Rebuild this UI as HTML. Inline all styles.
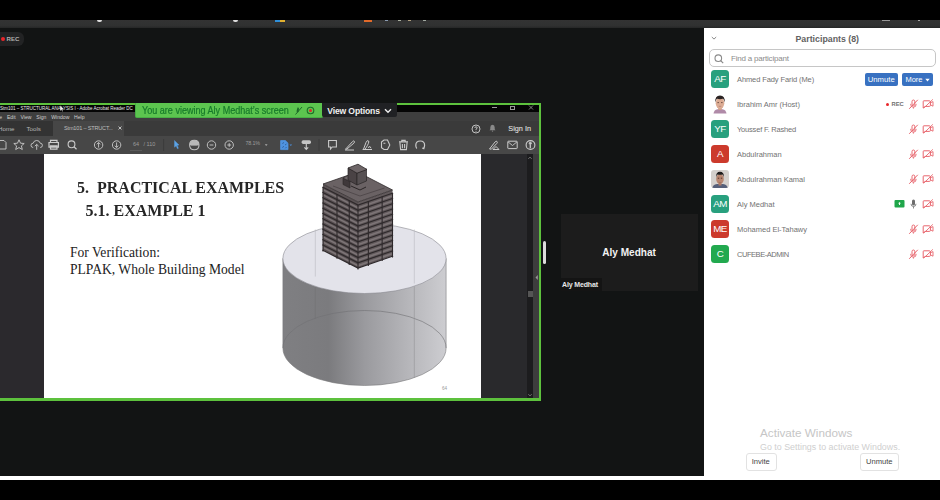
<!DOCTYPE html>
<html><head><meta charset="utf-8">
<style>
*{margin:0;padding:0;box-sizing:border-box}
html,body{width:940px;height:500px;overflow:hidden;background:#000;font-family:"Liberation Sans",sans-serif}
.a{position:absolute}
#top{left:0;top:0;width:940px;height:20px;background:#000}
#strip{left:0;top:20px;width:940px;height:8px;background:linear-gradient(#333,#303131 70%,#262727)}
#main{left:0;top:28px;width:704px;height:448px;background:#121414}
#wline{left:0;top:476px;width:940px;height:4px;background:#fff}
#panel{left:704px;top:28px;width:236px;height:448px;background:#fff}
.t{white-space:nowrap;line-height:1}
.av{left:711px;width:18px;height:18px;border-radius:3.5px;color:#fff;font-size:9.8px;line-height:18.6px;text-align:center;letter-spacing:-0.6px}
.nm{left:737px;font-size:7.5px;color:#727272}
.ph1{left:712px;width:17px;height:18px;background:radial-gradient(ellipse 4px 5px at 8.5px 8px,#b08070 0,#a07060 80%,transparent 100%),radial-gradient(ellipse 5px 5px at 8.5px 5px,#2a2220 0,#2a2220 90%,transparent 100%),radial-gradient(ellipse 8px 5px at 8.5px 18px,#b98aa0 0,#b98aa0 90%,transparent 100%),#fff}
.ph2{left:711px;width:18px;height:18px;border-radius:3px;background:radial-gradient(ellipse 4px 5px at 9px 8px,#8a6a58 0,#7a5a48 80%,transparent 100%),radial-gradient(ellipse 5px 4px at 9px 4.5px,#1a1a1a 0,#1a1a1a 90%,transparent 100%),radial-gradient(ellipse 9px 5px at 9px 18px,#4a5060 0,#4a5060 90%,transparent 100%),#cfcac8}
</style></head><body>
<div class="a" id="top"></div>
<div class="a" id="strip"></div>
<div class="a" id="main"></div>
<div class="a" id="wline"></div>
<div class="a" id="panel"></div>

<!-- strip dots -->
<div class="a" style="left:97px;top:20px;width:5px;height:1.5px;border-radius:0 0 2px 2px;background:#ddd"></div>
<div class="a" style="left:233px;top:20px;width:5px;height:1.5px;border-radius:0 0 2px 2px;background:#ddd"></div>
<div class="a" style="left:275px;top:20px;width:5px;height:1.5px;background:#2f8fd8"></div>
<div class="a" style="left:280px;top:20px;width:5px;height:1.5px;background:#e0b030"></div>
<div class="a" style="left:364px;top:20px;width:8px;height:1.5px;background:#e06a2a"></div>
<div class="a" style="left:385px;top:20px;width:3px;height:1px;background:#8a9ab0"></div>
<div class="a" style="left:398px;top:20px;width:3px;height:1px;background:#aab0a0"></div>
<div class="a" style="left:408px;top:20px;width:3px;height:1px;background:#b0a080"></div>
<div class="a" style="left:423px;top:20px;width:3px;height:1px;background:#a0a8a0"></div>
<div class="a" style="left:882px;top:20px;width:8px;height:1px;background:#999"></div>
<div class="a" style="left:918px;top:20px;width:2px;height:1px;background:#aaa"></div>
<!-- REC badge -->
<div class="a" style="left:-6px;top:32px;width:30px;height:14px;border-radius:6px;background:#222324"></div>
<div class="a" style="left:1px;top:36.5px;width:4px;height:4px;border-radius:50%;background:#e8262a"></div>
<div class="a t" style="left:6.6px;top:36.2px;font-size:6.1px;font-weight:bold;color:#b0b0b0">REC</div>

<!-- Acrobat window -->
<div class="a" style="left:0;top:103px;width:541px;height:298px;background:#5dc13d"></div>
<div class="a" style="left:0;top:105px;width:539px;height:293px;background:#3c3c3c"></div>
<div class="a" style="left:0;top:105px;width:539px;height:7px;background:#050505"></div>
<div class="a" style="left:0;top:112px;width:539px;height:9px;background:#3e3e3e"></div>
<div class="a" style="left:0;top:121px;width:539px;height:15px;background:#3a3a3a"></div>
<div class="a" style="left:0;top:121px;width:53px;height:15px;background:#333"></div>
<div class="a" style="left:53px;top:121px;width:71px;height:15px;background:#464646"></div>
<div class="a" style="left:0;top:136px;width:539px;height:18px;background:#474747"></div>
<div class="a" style="left:0;top:154px;width:44px;height:244px;background:#2b292d"></div>
<div class="a" style="left:44px;top:154px;width:437px;height:244px;background:#fff"></div>
<div class="a" style="left:481px;top:154px;width:46px;height:244px;background:#29292c"></div>
<div class="a" style="left:527px;top:154px;width:6px;height:244px;background:#1c1c1e"></div>
<div class="a" style="left:533px;top:154px;width:6px;height:244px;background:#3d3d3d"></div>

<!-- green banner -->
<div class="a" style="left:135px;top:103px;width:188px;height:15px;background:#5cc54f;border:1px solid #48ae45;border-top:none;border-radius:0 0 2px 2px"></div>
<div class="a" style="left:322px;top:103px;width:75px;height:14px;background:#202124;border-radius:0 0 2px 2px"></div>

<!-- video tile -->
<div class="a" style="left:561px;top:214px;width:137px;height:77px;background:#1c1c1c"></div>



<!-- ACROBAT DETAILS -->
<div class="a t" style="left:0px;top:106.9px;font-size:4.5px;color:#f0f0f0">Stm101 – STRUCTURAL ANALYSIS I - Adobe Acrobat Reader DC</div>
<div class="a" style="left:492px;top:107.2px;width:5px;height:0.7px;background:#9a9a9a"></div>
<div class="a" style="left:510px;top:105.6px;width:4.5px;height:4px;border:0.7px solid #9a9a9a"></div>
<svg class="a" style="left:528px;top:105px" width="6" height="5" viewBox="0 0 6 5"><path d="M1 0.5L5 4.5M5 0.5L1 4.5" stroke="#b0b0b0" stroke-width="0.7"/></svg>
<div class="a t" style="left:-6px;top:114.9px;font-size:5.1px;color:#d0d0d0;word-spacing:3.35px">File Edit View Sign Window Help</div>
<div class="a t" style="left:-2px;top:125.6px;font-size:6.2px;color:#b5b5b5">Home</div>
<div class="a t" style="left:26.5px;top:125.6px;font-size:6.2px;color:#b5b5b5">Tools</div>
<div class="a t" style="left:64px;top:125.8px;font-size:5.6px;color:#bdbdbd;letter-spacing:-0.2px">Stm101 – STRUCT...</div>
<svg class="a" style="left:117.5px;top:126px" width="4" height="4" viewBox="0 0 4 4"><path d="M0.5 0.5L3.5 3.5M3.5 0.5L0.5 3.5" stroke="#ccc" stroke-width="0.9"/></svg>
<svg class="a" style="left:470.5px;top:123.5px" width="10" height="10" viewBox="0 0 10 10"><circle cx="5" cy="5" r="4" fill="none" stroke="#cfcfcf" stroke-width="0.9"/><path d="M3.8 3.9Q3.9 2.8 5 2.8Q6.2 2.8 6.2 3.8Q6.2 4.5 5 5.1V5.9" fill="none" stroke="#cfcfcf" stroke-width="0.9"/><circle cx="5" cy="7.2" r="0.5" fill="#cfcfcf"/></svg>
<svg class="a" style="left:489px;top:124px" width="7" height="8" viewBox="0 0 7 8"><path d="M3.5 0.8Q1.3 0.8 1.3 3.4V5.3L0.5 6.3H6.5L5.7 5.3V3.4Q5.7 0.8 3.5 0.8Z" fill="#8a8a8a"/><circle cx="3.5" cy="7.1" r="0.7" fill="#8a8a8a"/></svg>
<div class="a t" style="left:508.3px;top:125.2px;font-size:7.3px;font-weight:normal;color:#dadada;letter-spacing:0px;-webkit-text-stroke:0.15px #dadada">Sign In</div>

<svg class="a" style="left:59px;top:104.5px" width="6" height="7" viewBox="0 0 6 7"><path d="M1 0.5L5.2 4.3L3.2 4.5L4 6.3L3.2 6.6L2.4 4.8L1 6Z" fill="#f4f4f4" stroke="#222" stroke-width="0.3"/></svg>
<!-- toolbar icons -->
<svg class="a" style="left:0;top:136px" width="539" height="18" viewBox="0 0 539 18" fill="none" stroke="#cacaca" stroke-width="0.9">
<path d="M-3 4.5H4L6 6.5V13H-3Z"/>
<path d="M19 3.8L20.5 7.2L24.2 7.5L21.4 9.9L22.3 13.5L19 11.6L15.7 13.5L16.6 9.9L13.8 7.5L17.5 7.2Z"/>
<path d="M33.2 11.5Q31 11.5 31 9.3Q31 7.2 33.2 7.2Q33.8 4.5 36.7 4.5Q39.6 4.5 40.2 7.2Q42.4 7.2 42.4 9.3Q42.4 11.5 40.2 11.5M36.7 13.8V8.4M34.8 10.2L36.7 8.4L38.6 10.2"/>
<path d="M50.5 6.5V4.3H57V6.5M49 6.5H58.4V11.2H49ZM50.5 9.8H57V13.2H50.5Z" stroke-width="1.2"/>
<circle cx="71.5" cy="8.3" r="3.4" stroke-width="1.1"/><path d="M74 10.8L76.5 13.3" stroke-width="1.3"/>
<circle cx="98.6" cy="9" r="4.2"/><path d="M98.6 11.6V6.6M96.8 8.3L98.6 6.5L100.4 8.3"/>
<circle cx="116.6" cy="9" r="4.2"/><path d="M116.6 6.4V11.4M114.8 9.7L116.6 11.5L118.4 9.7"/>
<path d="M163.6 3V15" stroke="#3c3c3c" stroke-width="1"/>
<path d="M319 3V15" stroke="#3c3c3c" stroke-width="1"/>
<path d="M174.5 4.5L179 9L177.2 9.3L178.4 12.3L177.4 12.7L176.2 9.8L174.5 11.2Z" fill="#5aa2e6" stroke="#5aa2e6" stroke-width="0.4"/>
<path d="M189.6 9.2Q189.6 4.2 194.3 4.2Q199 4.2 199 9.2Z" fill="#b8b8b8" stroke="none"/><path d="M189.6 9Q189.6 13.8 194.3 13.8Q199 13.8 199 9Q199 4.2 194.3 4.2Q189.6 4.2 189.6 9Z" stroke="#bdbdbd" stroke-width="1.1"/><path d="M191 9.5H197.6" stroke="#999" stroke-width="0.8"/>
<circle cx="211.5" cy="9" r="4.2"/><path d="M209.6 9H213.4"/>
<circle cx="229.2" cy="9" r="4.2"/><path d="M227.3 9H231.1M229.2 7.1V10.9"/>
<path d="M264.8 8.2H267.6L266.2 10Z" fill="#aaa" stroke="none"/>
<path d="M280.6 4.6H285.4L288 7.2V13.6H280.6Z" fill="#4f93e0" stroke="#4f93e0" stroke-width="0.8" stroke-linejoin="round"/><path d="M282.3 7.5L284 6.5M285 9L286.5 8M282.3 11.5L284 10.3M285.3 12.3L286.6 11" stroke="#2f5f9a" stroke-width="0.9"/>
<path d="M289.5 8.4H292.1L290.8 9.9Z" fill="#4a90e0" stroke="none"/>
<rect x="301.6" y="4.3" width="9.4" height="3.6" rx="1.6" fill="#c4c4c4" stroke="none"/><path d="M306.3 7.8V13.3M304.4 11.3L306.3 13.4L308.2 11.3" stroke-width="1.1"/>
<path d="M328.6 4.5H336.4V11H332.2L330.5 13V11H328.6Z" stroke-width="1.1"/>
<path d="M345.5 13.2L352.6 5.5Q353.6 4.4 354.3 5.3Q354.9 6.1 353.9 7.1L346.8 13.2ZM345 14H354" stroke-width="1"/>
<path d="M363.5 13.2L366 6.5Q367.4 3.5 368.6 5Q369.5 6.4 366 11.8L365 13.3M368 11.6L370 10.5L371 12.2M362.6 13.5H372" stroke-width="1"/>
<path d="M381.5 6L384 4H387.5L389.8 9L387.5 13.5H384L381.5 11.8V6Z M383.4 7.3H385.4" stroke-width="1.1"/>
<path d="M399 5.9H408M401.8 5.8V4.4H405.2V5.8M399.9 6.6L400.6 13.6H406.4L407.1 6.6M402.4 8V12.3M404.6 8V12.3" stroke-width="1.1"/>
<path d="M416.8 12.5Q415.8 11.5 415.8 9.2Q415.8 5 420.3 5Q424.6 5 424.6 9.2Q424.6 11.3 423.6 12.3M422.2 12L423.8 12.6L424.3 11" stroke-width="1.2"/>
<path d="M489.5 13L495.2 5.8Q496.2 4.8 497 5.5Q497.8 6.2 496.9 7.3L491.4 13.2ZM496 10.5L499 13.5H493Z" stroke-width="1"/>
<rect x="507.8" y="5.2" width="9.4" height="7.4" rx="0.6" stroke-width="1"/><path d="M508 5.8L512.5 9.5L517 5.8" stroke-width="0.9"/>
<circle cx="530.5" cy="9" r="4.4" stroke-width="1.1"/><circle cx="530.3" cy="7.3" r="1.1" fill="#cacaca"/><path d="M530.3 8.6V12.3" stroke-width="1.3"/>
</svg>
<div class="a t" style="left:133px;top:141.8px;font-size:5.5px;color:#9c9c9c">64</div>
<div class="a t" style="left:143.5px;top:141.8px;font-size:5.5px;color:#9c9c9c">/ 110</div>
<div class="a" style="left:130px;top:150px;width:12px;height:0.6px;background:#5a5a5a"></div>
<div class="a t" style="left:245.5px;top:141px;font-size:5.4px;color:#9c9c9c;letter-spacing:-0.2px">78.1%</div>

<!-- scrollbar bits -->
<svg class="a" style="left:527px;top:155px" width="6" height="6" viewBox="0 0 6 6"><path d="M1.2 4L3 2L4.8 4" fill="none" stroke="#777" stroke-width="0.8"/></svg>
<div class="a" style="left:527.5px;top:291px;width:5.5px;height:6px;background:#555"></div>
<svg class="a" style="left:534px;top:274px" width="5" height="7" viewBox="0 0 5 7"><path d="M3.8 1L1.5 3.5L3.8 6Z" fill="#999"/></svg>

<!-- BLDG --><svg class="a" style="left:270px;top:155px" width="200" height="240" viewBox="0 0 200 240"><defs><linearGradient id="sg" x1="0" x2="1" y1="0" y2="0"><stop offset="0" stop-color="#7f7f82"/><stop offset="0.28" stop-color="#7b7b7e"/><stop offset="0.5" stop-color="#9a9a9e"/><stop offset="0.75" stop-color="#b4b4b8"/><stop offset="1" stop-color="#cdcdd1"/></linearGradient></defs><path d="M12.90,103.50 L12.90,193.00 A81.6,37.5 0 0 0 176.10,193.00 L176.10,103.50 Z" fill="url(#sg)" stroke="#7a7a7c" stroke-width="0.6"/><path d="M12.90,193.00 A81.6,37.5 0 0 1 176.10,193.00" fill="none" stroke="#707074" stroke-width="0.6"/><path d="M45.30,121.50 L45.30,163.50" stroke="#6e6e72" stroke-width="0.5"/><path d="M144.30,128.50 L144.30,222.80" stroke="#8a8a8e" stroke-width="0.5"/><ellipse cx="94.5" cy="103.5" rx="81.6" ry="35" fill="#e3e3ea" stroke="#8a8a90" stroke-width="0.6"/><path d="M45.30,74.50 L45.30,121.50" stroke="#b8b8c0" stroke-width="0.6"/><path d="M144.30,74.50 L144.30,128.50" stroke="#b8b8c0" stroke-width="0.6"/><path d="M53.00,29.00 L88.00,47.00 L88.00,113.00 L53.00,95.00 Z" fill="#5a5254"/><path d="M88.00,47.00 L122.50,35.00 L122.50,101.00 L88.00,113.00 Z" fill="#625a5c"/><path d="M53.50,34.89 L88.00,52.89 L122.00,40.89" fill="none" stroke="#7d7577" stroke-width="1.6"/><path d="M52.40,32.00 L88.00,50.00 L123.10,38.00" fill="none" stroke="#2e292b" stroke-width="1.3"/><path d="M53.50,40.14 L88.00,58.14 L122.00,46.14" fill="none" stroke="#7d7577" stroke-width="1.6"/><path d="M52.40,37.25 L88.00,55.25 L123.10,43.25" fill="none" stroke="#2e292b" stroke-width="1.3"/><path d="M53.50,45.39 L88.00,63.39 L122.00,51.39" fill="none" stroke="#7d7577" stroke-width="1.6"/><path d="M52.40,42.50 L88.00,60.50 L123.10,48.50" fill="none" stroke="#2e292b" stroke-width="1.3"/><path d="M53.50,50.64 L88.00,68.64 L122.00,56.64" fill="none" stroke="#7d7577" stroke-width="1.6"/><path d="M52.40,47.75 L88.00,65.75 L123.10,53.75" fill="none" stroke="#2e292b" stroke-width="1.3"/><path d="M53.50,55.89 L88.00,73.89 L122.00,61.89" fill="none" stroke="#7d7577" stroke-width="1.6"/><path d="M52.40,53.00 L88.00,71.00 L123.10,59.00" fill="none" stroke="#2e292b" stroke-width="1.3"/><path d="M53.50,61.14 L88.00,79.14 L122.00,67.14" fill="none" stroke="#7d7577" stroke-width="1.6"/><path d="M52.40,58.25 L88.00,76.25 L123.10,64.25" fill="none" stroke="#2e292b" stroke-width="1.3"/><path d="M53.50,66.39 L88.00,84.39 L122.00,72.39" fill="none" stroke="#7d7577" stroke-width="1.6"/><path d="M52.40,63.50 L88.00,81.50 L123.10,69.50" fill="none" stroke="#2e292b" stroke-width="1.3"/><path d="M53.50,71.64 L88.00,89.64 L122.00,77.64" fill="none" stroke="#7d7577" stroke-width="1.6"/><path d="M52.40,68.75 L88.00,86.75 L123.10,74.75" fill="none" stroke="#2e292b" stroke-width="1.3"/><path d="M53.50,76.89 L88.00,94.89 L122.00,82.89" fill="none" stroke="#7d7577" stroke-width="1.6"/><path d="M52.40,74.00 L88.00,92.00 L123.10,80.00" fill="none" stroke="#2e292b" stroke-width="1.3"/><path d="M53.50,82.14 L88.00,100.14 L122.00,88.14" fill="none" stroke="#7d7577" stroke-width="1.6"/><path d="M52.40,79.25 L88.00,97.25 L123.10,85.25" fill="none" stroke="#2e292b" stroke-width="1.3"/><path d="M53.50,87.39 L88.00,105.39 L122.00,93.39" fill="none" stroke="#7d7577" stroke-width="1.6"/><path d="M52.40,84.50 L88.00,102.50 L123.10,90.50" fill="none" stroke="#2e292b" stroke-width="1.3"/><path d="M53.50,92.64 L88.00,110.64 L122.00,98.64" fill="none" stroke="#7d7577" stroke-width="1.6"/><path d="M52.40,89.75 L88.00,107.75 L123.10,95.75" fill="none" stroke="#2e292b" stroke-width="1.3"/><path d="M52.40,95.00 L88.00,113.00 L123.10,101.00" fill="none" stroke="#2e292b" stroke-width="1.3"/><path d="M53.00,32.00 L53.00,96.50" stroke="#2e292b" stroke-width="1.1"/><path d="M67.00,39.20 L67.00,103.70" stroke="#2e292b" stroke-width="1.1"/><path d="M79.25,45.50 L79.25,110.00" stroke="#2e292b" stroke-width="1.1"/><path d="M88.00,50.00 L88.00,114.50" stroke="#2e292b" stroke-width="1.1"/><path d="M98.35,46.40 L98.35,110.90" stroke="#2e292b" stroke-width="1.1"/><path d="M112.15,41.60 L112.15,106.10" stroke="#2e292b" stroke-width="1.1"/><path d="M122.50,38.00 L122.50,102.50" stroke="#2e292b" stroke-width="1.1"/><path d="M53.00,29.00 L87.50,17.00 L122.50,35.00 L88.00,47.00 Z" fill="#6a6264" stroke="#2e292b" stroke-width="0.8" stroke-linejoin="round"/><path d="M63.00,31.00 L90.00,41.00 L114.50,33.00" fill="none" stroke="#4a4345" stroke-width="0.8"/><path d="M73.00,23.00 L80.00,26.50 L80.00,33.00 L73.00,29.50Z" fill="#3f383a" stroke="#2a2526" stroke-width="0.6"/><path d="M73.00,23.00 L81.00,19.00 L88.00,22.50 L80.00,26.50Z" fill="#6e6668" stroke="#2a2526" stroke-width="0.6"/><path d="M78.00,13.00 L87.00,18.00 L87.00,30.00 L78.00,25.00Z" fill="#4a4345" stroke="#2a2526" stroke-width="0.7"/><path d="M87.00,18.00 L96.50,14.00 L96.50,26.00 L87.00,30.00Z" fill="#565052" stroke="#2a2526" stroke-width="0.7"/><path d="M78.00,13.00 L88.00,9.20 L97.00,14.50 L87.00,18.20Z" fill="#6e6668" stroke="#2a2526" stroke-width="0.8" stroke-linejoin="round"/><path d="M81.00,31.00 L90.00,35.00 L96.00,32.00" fill="none" stroke="#2a2526" stroke-width="1"/></svg><!-- /BLDG -->
<svg class="a" style="left:527px;top:392px" width="6" height="6" viewBox="0 0 6 6"><path d="M1.2 2L3 4L4.8 2" fill="none" stroke="#777" stroke-width="0.8"/></svg>
<!-- PDF content -->
<div class="a t" style="left:77px;top:180px;font-family:'Liberation Serif',serif;font-weight:bold;font-size:16px;color:#262626;transform:scaleY(1.08);transform-origin:0 100%">5.&nbsp; PRACTICAL EXAMPLES</div>
<div class="a t" style="left:85.5px;top:202.9px;font-family:'Liberation Serif',serif;font-weight:bold;font-size:16px;color:#262626;transform:scaleY(1.08);transform-origin:0 100%">5.1. EXAMPLE 1</div>
<div class="a t" style="left:70px;top:246.3px;font-family:'Liberation Serif',serif;font-size:13.6px;color:#222">For Verification:</div>
<div class="a t" style="left:70px;top:263px;font-family:'Liberation Serif',serif;font-size:13.6px;color:#222">PLPAK, Whole Building Model</div>
<div class="a t" style="left:442px;top:387px;font-size:4.6px;color:#999">64</div>

<!-- green banner text -->
<div class="a t" style="left:141.8px;top:105.9px;font-size:10px;color:#167a2a;transform:scaleX(0.905);transform-origin:0 0;-webkit-text-stroke:0.2px #167a2a">You are viewing Aly Medhat’s screen</div>
<svg class="a" style="left:294px;top:106px" width="9" height="9" viewBox="0 0 9 9"><path d="M3.5 1.5Q4.8 1 5 2.6L4.6 5.5Q4.2 6.8 3.1 6.3Q2.4 5.9 2.7 4.4Z" fill="#1d6b28"/><path d="M1.5 8.5L8 1" stroke="#1d6b28" stroke-width="1"/></svg>
<svg class="a" style="left:306px;top:106.3px" width="9" height="9" viewBox="0 0 9 9"><circle cx="4.5" cy="4.5" r="3.3" fill="none" stroke="#1d6b28" stroke-width="1.1"/><circle cx="4.5" cy="4.5" r="1.5" fill="#e02a2a"/></svg>
<div class="a t" style="left:327.3px;top:106.6px;font-size:8.6px;font-weight:bold;color:#f0f0f0;letter-spacing:-0.15px">View Options</div>
<svg class="a" style="left:384px;top:107.5px" width="8" height="6" viewBox="0 0 8 6"><path d="M1 1.3L4 4.3L7 1.3" fill="none" stroke="#eee" stroke-width="1.4"/></svg>

<!-- divider handle -->
<div class="a" style="left:543.3px;top:240.5px;width:3px;height:23.5px;border-radius:1.5px;background:#dcdcdc"></div>

<!-- video tile text -->
<div class="a t" style="left:602.3px;top:247.5px;font-size:10.05px;font-weight:bold;color:#f2f2f2">Aly Medhat</div>
<div class="a" style="left:561px;top:278px;width:41px;height:13px;background:#141414"></div>
<div class="a t" style="left:562px;top:281px;font-size:7px;font-weight:bold;color:#e8e8e8;letter-spacing:-0.15px">Aly Medhat</div>

<!-- PANEL -->
<svg width="0" height="0" style="position:absolute">
<defs>
<g id="mic"><path d="M4 5.2V2.6Q4 1 5.4 1Q6.8 1 6.8 2.6V5.2Q6.8 6.8 5.4 6.8Q4 6.8 4 5.2Z" fill="none" stroke="#e8666e" stroke-width="1"/><path d="M2.6 4.9Q2.6 8.2 5.4 8.2Q8.2 8.2 8.2 4.9M5.4 8.2V9.6" fill="none" stroke="#e8666e" stroke-width="0.9"/><path d="M1.2 9.8L9.8 0.8" stroke="#e8666e" stroke-width="1"/></g>
<g id="vid"><path d="M1.6 1.8H7.4Q8.4 1.8 8.4 2.8V6.4Q8.4 7.4 7.4 7.4H2.8L1.2 9V2.8Q1.2 1.8 1.6 1.8Z" fill="none" stroke="#e8666e" stroke-width="1"/><path d="M8.4 3.8L11 2.6V7.2L8.4 5.8" fill="none" stroke="#e8666e" stroke-width="0.9"/><path d="M1.5 9.4L10.8 0.4" stroke="#e8666e" stroke-width="0.9"/></g>
</defs></svg>
<svg class="a" style="left:710.5px;top:35.5px" width="6" height="4" viewBox="0 0 6 4"><path d="M0.8 1L3 3.1L5.2 1" fill="none" stroke="#888" stroke-width="1"/></svg>
<div class="a t" style="left:795.5px;top:34.5px;font-size:8.8px;font-weight:bold;color:#626262">Participants (8)</div>
<div class="a" style="left:708.6px;top:49.4px;width:227.8px;height:17.4px;border:1.8px solid #c6c6c6;border-radius:5px"></div>
<svg class="a" style="left:714px;top:54px" width="10" height="10" viewBox="0 0 10 10"><circle cx="4.3" cy="4.2" r="3.3" fill="none" stroke="#8a8a8a" stroke-width="1.1"/><path d="M6.7 6.6L9.2 9.1" stroke="#8a8a8a" stroke-width="1.2"/></svg>
<div class="a t" style="left:731px;top:54.7px;font-size:8px;color:#8c8c8c;letter-spacing:-0.2px">Find a participant</div>
<div class="a" style="left:864.5px;top:73px;width:33.5px;height:13px;background:#3871c1;border-radius:2px"></div>
<div class="a t" style="left:867.8px;top:76px;font-size:7.7px;color:#fff">Unmute</div>
<div class="a" style="left:901.5px;top:73px;width:31.5px;height:13px;background:#3871c1;border-radius:2px"></div>
<div class="a t" style="left:905.4px;top:76px;font-size:7.5px;color:#fff">More</div>
<svg class="a" style="left:925px;top:78px" width="5" height="4" viewBox="0 0 5 4"><path d="M0.3 0.8H4.7L2.5 3.4Z" fill="#fff"/></svg>
<div class="a" style="left:885.8px;top:102.9px;width:3.2px;height:3.2px;border-radius:50%;background:#e8262a"></div>
<div class="a t" style="left:891.5px;top:101.5px;font-size:5.8px;font-weight:bold;color:#707070">REC</div>
<div class="a av" style="top:70.4px;background:#28a07e">AF</div>
<div class="a t nm" style="top:76.2px;letter-spacing:-0.1px">Ahmed Fady Farid (Me)</div>
<svg class="a" style="left:711px;top:94.3px" width="18" height="20" viewBox="0 0 18 20"><defs><filter id="bl1" x="-20%" y="-20%" width="140%" height="140%"><feGaussianBlur stdDeviation="0.45"/></filter></defs><g filter="url(#bl1)">
<path d="M2.5 19.5Q3 15.8 6.5 15.2L11.5 15.2Q15 15.8 15.5 19.5Z" fill="#b08aa8"/>
<path d="M7.2 13L7.2 16L10.8 16L10.8 13Z" fill="#d0a08a"/>
<ellipse cx="9" cy="9.2" rx="4.3" ry="5.6" fill="#dcac94"/>
<path d="M4.2 8.5Q3.8 1.5 9 1.4Q14.2 1.5 13.8 8.5Q13.2 5.2 12 4.8Q9 5.5 6 4.8Q4.8 5.2 4.2 8.5Z" fill="#2a2222"/>
<path d="M6.4 8.6H8M10 8.6H11.6" stroke="#6a4a40" stroke-width="0.9"/>
<path d="M7.8 12.3H10.2" stroke="#b07a70" stroke-width="0.7"/>
</g></svg>
<div class="a t nm" style="top:101.1px">Ibrahim Amr (Host)</div>
<svg class="a" style="left:908px;top:99.3px" width="11" height="10"><use href="#mic"/></svg>
<svg class="a" style="left:922px;top:99.3px" width="12" height="10"><use href="#vid"/></svg>
<div class="a av" style="top:120.3px;background:#28a07e">YF</div>
<div class="a t nm" style="top:126.1px;letter-spacing:-0.2px">Youssef F. Rashed</div>
<svg class="a" style="left:908px;top:124.3px" width="11" height="10"><use href="#mic"/></svg>
<svg class="a" style="left:922px;top:124.3px" width="12" height="10"><use href="#vid"/></svg>
<div class="a av" style="top:145.2px;background:#cc3a2c">A</div>
<div class="a t nm" style="top:151.0px">Abdulrahman</div>
<svg class="a" style="left:908px;top:149.2px" width="11" height="10"><use href="#mic"/></svg>
<svg class="a" style="left:922px;top:149.2px" width="12" height="10"><use href="#vid"/></svg>
<svg class="a" style="left:711px;top:170.1px" width="18" height="18" viewBox="0 0 18 18"><defs><clipPath id="cp2"><rect width="18" height="18" rx="3"/></clipPath><filter id="bl2" x="-20%" y="-20%" width="140%" height="140%"><feGaussianBlur stdDeviation="0.45"/></filter></defs><g clip-path="url(#cp2)"><rect width="18" height="18" fill="#d4d0cc"/><g filter="url(#bl2)">
<path d="M1 19Q1.5 14.5 6 14L12 14Q16.5 14.5 17 19Z" fill="#56607a"/>
<path d="M7.5 12.5L7.5 15.5L10.5 15.5L10.5 12.5Z" fill="#b07c68"/>
<ellipse cx="9" cy="9" rx="3.8" ry="5" fill="#b88670"/>
<path d="M5 7.5Q4.8 1.8 9 1.8Q13.2 1.8 13 7.5Q12.5 4.6 11.5 4.4Q9 5 6.5 4.4Q5.5 4.6 5 7.5Z" fill="#1e1a1a"/>
<path d="M6.6 11Q9 15.5 11.4 11Q10.5 13 9 13Q7.5 13 6.6 11Z" fill="#2a2020"/>
<path d="M6.8 8.2H8.2M9.8 8.2H11.2" stroke="#4a3028" stroke-width="0.9"/>
</g></g></svg>
<div class="a t nm" style="top:175.9px">Abdulrahman Kamal</div>
<svg class="a" style="left:908px;top:174.1px" width="11" height="10"><use href="#mic"/></svg>
<svg class="a" style="left:922px;top:174.1px" width="12" height="10"><use href="#vid"/></svg>
<div class="a av" style="top:195.1px;background:#28a07e">AM</div>
<div class="a t nm" style="top:200.9px">Aly Medhat</div>
<svg class="a" style="left:894px;top:199.1px" width="11" height="9" viewBox="0 0 11 9"><rect x="0.5" y="1" width="10" height="7.5" rx="1" fill="#1fa64a"/><path d="M5.5 3L4 4.6H5V6H6V4.6H7Z" fill="#f4fff4"/></svg>
<svg class="a" style="left:910px;top:199.1px" width="7" height="10" viewBox="0 0 7 10"><rect x="2" y="0.5" width="3" height="6" rx="1.5" fill="#6d6d6d"/><path d="M1 4.8Q1 7.5 3.5 7.5Q6 7.5 6 4.8" stroke="#7a7a7a" stroke-width="0.9" fill="none"/><path d="M3.5 7.5V9.5" stroke="#7a7a7a" stroke-width="0.9"/></svg>
<svg class="a" style="left:922px;top:199.1px" width="12" height="10"><use href="#vid"/></svg>
<div class="a av" style="top:220.0px;background:#cc3a2c">ME</div>
<div class="a t nm" style="top:225.8px">Mohamed El-Tahawy</div>
<svg class="a" style="left:908px;top:224.0px" width="11" height="10"><use href="#mic"/></svg>
<svg class="a" style="left:922px;top:224.0px" width="12" height="10"><use href="#vid"/></svg>
<div class="a av" style="top:244.9px;background:#22a94f">C</div>
<div class="a t nm" style="top:250.7px;letter-spacing:-0.45px">CUFEBE-ADMIN</div>
<svg class="a" style="left:908px;top:248.9px" width="11" height="10"><use href="#mic"/></svg>
<svg class="a" style="left:922px;top:248.9px" width="12" height="10"><use href="#vid"/></svg>
<div class="a t" style="left:760px;top:426.6px;font-size:11.7px;color:#c6c6c6">Activate Windows</div>
<div class="a t" style="left:760px;top:442.6px;font-size:8.9px;color:#cfcfcf">Go to Settings to activate Windows.</div>
<div class="a" style="left:745.5px;top:453px;width:31px;height:17.5px;border:1px solid #e2e2e2;border-radius:3px;background:#fff"></div>
<div class="a t" style="left:751.7px;top:458.2px;font-size:7.6px;color:#444">Invite</div>
<div class="a" style="left:859.5px;top:453px;width:39.5px;height:17.5px;border:1px solid #e2e2e2;border-radius:3px;background:#fff"></div>
<div class="a t" style="left:866px;top:458.2px;font-size:7.6px;color:#444">Unmute</div>

</body></html>
